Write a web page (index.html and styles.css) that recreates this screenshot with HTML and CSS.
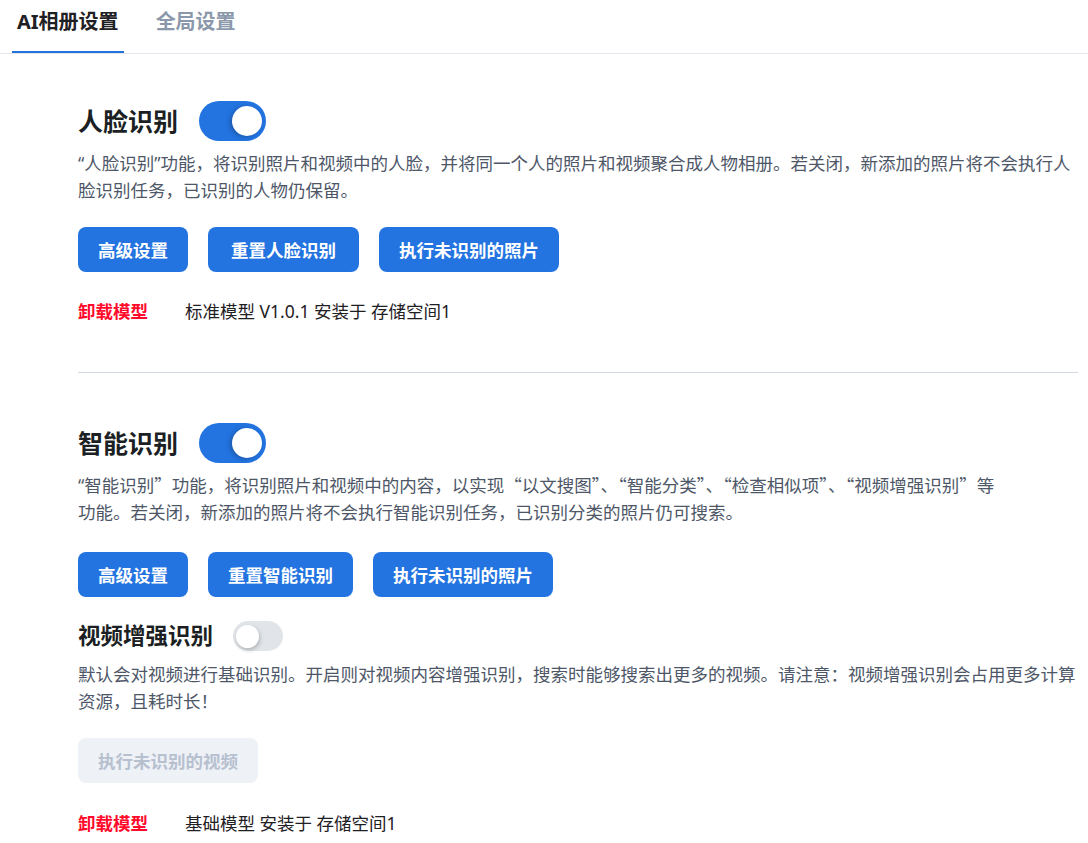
FILE: index.html
```html
<!DOCTYPE html>
<html lang="zh-CN">
<head>
  <meta charset="UTF-8">
  <title>AI相册设置</title>
  <link rel="stylesheet" href="styles.css">
</head>
<body>
  <nav class="tabs">
    <div class="tab active">AI相册设置</div>
    <div class="tab">全局设置</div>
  </nav>

  <div class="content">
    <section class="block">
      <div class="title-row">
        <h2 class="title">人脸识别</h2>
        <div class="switch on"><span class="knob"></span></div>
      </div>
      <p class="desc">“人脸识别”功能，将识别照片和视频中的人脸，并将同一个人的照片和视频聚合成人物相册。若关闭，新添加的照片将不会执行人脸识别任务，已识别的人物仍保留。</p>
      <div class="actions">
        <button class="btn">高级设置</button>
        <button class="btn wide">重置人脸识别</button>
        <button class="btn">执行未识别的照片</button>
      </div>
      <div class="model">
        <span class="uninstall">卸载模型</span>
        <span>标准模型 V1.0.1 安装于 存储空间1</span>
      </div>
    </section>

    <hr class="divider">

    <section class="block">
      <div class="title-row">
        <h2 class="title">智能识别</h2>
        <div class="switch on"><span class="knob"></span></div>
      </div>
      <p class="desc cjk"><span class="lead">“</span>智能识别”功能，将识别照片和视频中的内容，以实现“以文搜图”、“智能分类”、“检查相似项”、“视频增强识别”等<br>功能。若关闭，新添加的照片将不会执行智能识别任务，已识别分类的照片仍可搜索。</p>
      <div class="actions lower">
        <button class="btn">高级设置</button>
        <button class="btn">重置智能识别</button>
        <button class="btn">执行未识别的照片</button>
      </div>

      <div class="title-row sub">
        <h3 class="subtitle">视频增强识别</h3>
        <div class="switch small"><span class="knob"></span></div>
      </div>
      <p class="desc tight">默认会对视频进行基础识别。开启则对视频内容增强识别，搜索时能够搜索出更多的视频。请注意：视频增强识别会占用更多计算资源，且耗时长！</p>
      <div class="actions">
        <button class="btn" disabled>执行未识别的视频</button>
      </div>
      <div class="model last">
        <span class="uninstall">卸载模型</span>
        <span>基础模型 安装于 存储空间1</span>
      </div>
    </section>
  </div>
</body>
</html>
```

FILE: styles.css
```css
body {
  margin: 0;
  font-family: "Noto Sans", "Noto Sans CJK SC", sans-serif;
  color: #1c1f24;
  background: #fff;
}
.tabs {
  display: flex;
  padding-left: 12px;
  border-bottom: 1px solid #e3e8ee;
}
.tab {
  box-sizing: border-box;
  height: 53px;
  padding: 7px 5px 0;
  line-height: 30px;
  font-size: 20px;
  font-weight: 700;
  color: #8b98ab;
  border-bottom: 2px solid transparent;
  margin-right: 27px;
}
.tab.active {
  color: #1f2024;
  border-bottom-color: #2273e0;
}
.content {
  padding: 47px 10px 0 78px;
}
.title-row {
  display: flex;
  align-items: center;
  gap: 21px;
}
.title {
  margin: 0;
  font-size: 25px;
  font-weight: 700;
  line-height: 40px;
}
.subtitle {
  margin: 0;
  font-size: 22.5px;
  font-weight: 700;
  line-height: 30px;
}
.title-row.sub {
  margin-top: 24px;
  gap: 20px;
}
.switch {
  box-sizing: border-box;
  width: 67px;
  height: 40px;
  border-radius: 20px;
  background: #2374e1;
  display: flex;
  align-items: center;
  justify-content: flex-end;
  padding: 0 4px;
}
.switch .knob {
  width: 30px;
  height: 30px;
  border-radius: 50%;
  background: #fff;
  box-shadow: -2px 1px 5px rgba(0, 0, 0, 0.25);
}
.switch.small {
  width: 50px;
  height: 30px;
  border-radius: 15px;
  background: #e1e4e9;
  justify-content: flex-start;
  padding: 0 3px;
}
.switch.small .knob {
  width: 23px;
  height: 23px;
  box-shadow: 1px 2px 4px rgba(0, 0, 0, 0.22);
}
.desc {
  margin: 9px 0 0;
  font-size: 17.5px;
  line-height: 26.5px;
  color: #4e5768;
}
.desc.cjk {
  font-family: "Noto Sans CJK SC", sans-serif;
}
.desc .lead {
  font-family: "Noto Sans", sans-serif;
}
.desc.tight {
  margin-top: 10px;
}
.actions {
  display: flex;
  gap: 20px;
  margin-top: 24px;
}
.actions.lower {
  margin-top: 27px;
}
.btn {
  height: 45px;
  padding: 0 20px;
  border: none;
  border-radius: 8px;
  background: #2374e1;
  color: #fff;
  font-family: inherit;
  font-size: 17.5px;
  font-weight: 700;
  cursor: pointer;
}
.btn.wide {
  padding: 0 23px;
}
.btn:disabled {
  background: #eef1f6;
  color: #b6c0cf;
  cursor: default;
}
.model {
  display: flex;
  gap: 37px;
  margin-top: 26px;
  font-size: 17.5px;
  line-height: 26px;
  color: #1f2024;
}
.model.last {
  margin-top: 27px;
}
.uninstall {
  color: #ff0a2b;
  font-weight: 700;
}
.divider {
  border: none;
  border-top: 1px solid #d3d9e0;
  margin: 48px 0 50px;
}
```
